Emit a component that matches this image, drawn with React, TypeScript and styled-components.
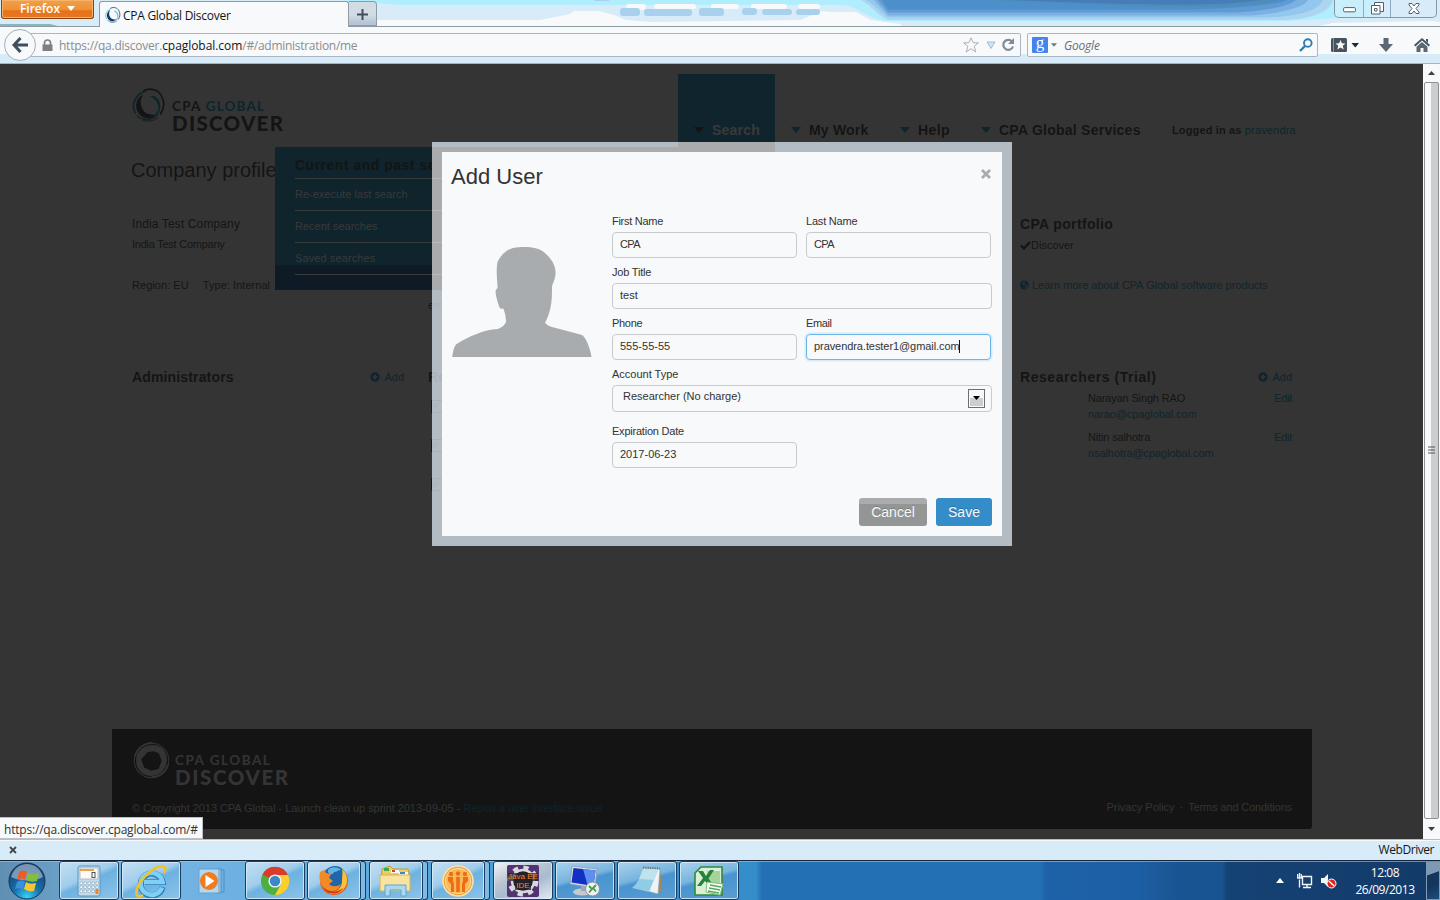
import React from "react";
import styled, { createGlobalStyle } from "styled-components";

const sans = '"Liberation Sans", Arial, sans-serif';
const ui = '"Open Sans", "Noto Sans", sans-serif';
const ink = "#141414";
const teal = "#0f242c";
const dim = "#343434";

const Global = createGlobalStyle`
  * { box-sizing: border-box; }
  body { margin: 0; overflow: hidden; background: ${dim}; }
`;

const Screen = styled.div`
  width: 1440px;
  height: 900px;
  display: flex;
  flex-direction: column;
  position: relative;
  overflow: hidden;
  font-family: ${sans};
`;

const T = styled.span<{ $s?: number; $c?: string; $b?: boolean; $track?: number; $ui?: boolean }>`
  font-family: ${(p) => (p.$ui ? ui : sans)};
  font-size: ${(p) => p.$s ?? 11}px;
  color: ${(p) => p.$c ?? ink};
  font-weight: ${(p) => (p.$b ? (p.$ui ? 600 : 700) : 400)};
  letter-spacing: ${(p) => p.$track ?? 0}px;
  white-space: nowrap;
`;

/* ---------- browser chrome ---------- */
const TitleBar = styled.div`
  height: 27px;
  flex: none;
  position: relative;
  display: flex;
  align-items: flex-start;
  background: #d8ebf9;
  border-bottom: 1px solid #8f9ba3;
`;
const Sky = styled.svg`
  position: absolute;
  inset: 0;
`;
const FirefoxButton = styled.div`
  position: relative;
  width: 93px;
  height: 19px;
  margin-left: 1px;
  display: flex;
  justify-content: center;
  align-items: center;
  gap: 7px;
  background: linear-gradient(#f3a049 0, #ee9033 55%, #e8701a 60%, #e57a22 100%);
  border: 1px solid #8c4312;
  border-top: 0;
  border-radius: 0 0 3px 3px;
  box-shadow: inset 0 0 0 1px #f5b26a;
  padding-bottom: 1px;
`;
const Tab = styled.div`
  position: relative;
  width: 250px;
  height: 27px;
  margin: 1px 0 0 5px;
  padding: 0 0 0 5px;
  display: flex;
  align-items: center;
  gap: 2px;
  background: #f7f9fb;
  border: 1px solid #8f9ba3;
  border-bottom: 0;
  border-radius: 3px 3px 0 0;
`;
const NewTab = styled.div`
  position: relative;
  width: 28px;
  height: 25px;
  margin-top: 1px;
  padding-top: 2px;
  display: grid;
  place-items: center;
  background: linear-gradient(#d3dce5 0 55%, #b5c5d6 90%);
  border: 1px solid #8f9ba3;
  border-left: 0;
  border-radius: 0 4px 0 0;
`;
const WindowButtons = styled.div`
  position: relative;
  margin-left: auto;
  margin-right: 3px;
  width: 103px;
  height: 18px;
  display: grid;
  grid-template-columns: 28px 27px 1fr;
  border: 1px solid #8497a8;
  border-top: 0;
  border-radius: 0 0 5px 5px;
  background: linear-gradient(90deg, #c8effb 0 45px, #d8ebf9 45px);
`;
const WindowButton = styled.div`
  display: grid;
  place-items: center;
  & + & {
    border-left: 1px solid #8fa9c0;
  }
`;
const NavBar = styled.div`
  height: 37px;
  flex: none;
  display: flex;
  align-items: flex-start;
  padding-top: 6px;
  position: relative;
  background: linear-gradient(#f7f9fb 0 27px, #d8ebf9 27px);
  border-bottom: 1px solid #a9b3bc;
`;
const Back = styled.div`
  width: 32px;
  height: 32px;
  margin: -4px 0 0 4px;
  z-index: 1;
  display: grid;
  place-items: center;
  background: #f7f9fb;
  border: 1px solid #a3b0bc;
  border-radius: 50%;
`;
const UrlBox = styled.div`
  width: 992px;
  height: 24px;
  margin-left: -7px;
  padding: 0 5px 0 12px;
  display: flex;
  align-items: center;
  background: #f7f9fb;
  border: 1px solid #a9b7c4;
  border-radius: 2px;
`;
const UrlText = styled.div`
  flex: 1;
  margin-left: 6px;
  white-space: nowrap;
`;
const SearchBox = styled.div`
  width: 291px;
  height: 24px;
  margin-left: 6px;
  padding: 0 4px;
  display: flex;
  align-items: center;
  background: #f7f9fb;
  border: 1px solid #a9b7c4;
  border-radius: 2px;
`;
const GoogleBadge = styled.div`
  width: 16px;
  height: 16px;
  display: flex;
  justify-content: center;
  background: #4384ee;
  border-radius: 1px;
  color: #fff;
  font: 400 17px/12px "Liberation Serif", serif;
`;
const ToolIcons = styled.div`
  flex: 1;
  height: 24px;
  display: flex;
  align-items: center;
  padding-left: 13px;
`;

/* ---------- web page ---------- */
const Viewport = styled.div`
  height: 775px;
  flex: none;
  display: flex;
`;
const Page = styled.div`
  width: 1423px;
  display: flex;
  flex-direction: column;
  background: ${dim};
  padding: 0 111px 10px 112px;
`;
const Header = styled.div`
  height: 78px;
  padding-left: 20px;
  display: flex;
`;
const Brand = styled.div`
  display: flex;
  align-items: flex-start;
`;
const BrandName = styled.div`
  margin-left: 6px;
  display: flex;
  flex-direction: column;
  font-family: Lato, sans-serif;
`;
const BrandLine = styled.div<{ $big?: boolean; $track?: number; $c: string }>`
  font-size: ${(p) => (p.$big ? 20.5 : 13.5)}px;
  line-height: ${(p) => (p.$big ? 20 : 14)}px;
  font-weight: ${(p) => (p.$big ? 900 : 700)};
  letter-spacing: ${(p) => p.$track ?? 0}px;
  color: ${(p) => p.$c};
  white-space: pre;
`;
const Nav = styled.div`
  display: flex;
  margin: 10px 0 0 auto;
  padding-right: 16px;
`;
const NavItem = styled.div<{ $active?: boolean; $w: number }>`
  width: ${(p) => p.$w}px;
  height: 78px;
  padding: 48px 0 0 16px;
  display: flex;
  align-items: flex-start;
  gap: 8px;
  line-height: 16px;
  background: ${(p) => (p.$active ? teal : "transparent")};
`;
const Caret = styled.i<{ $c: string }>`
  margin-top: 5px;
  border: 5px solid transparent;
  border-top: 6px solid ${(p) => p.$c};
  border-bottom: 0;
`;
const Dropdown = styled.div`
  position: absolute;
  left: 275px;
  top: 147px;
  width: 403px;
  height: 143px;
  padding: 0 0 0 20px;
  background: linear-gradient(${teal} 0 118px, #0e1a26 118px);
`;
const DropTitle = styled.div`
  height: 32px;
  line-height: 36px;
  border-bottom: 1px solid #3a3a3a;
`;
const DropItem = styled.div`
  height: 32px;
  line-height: 28px;
  border-bottom: 1px solid #3a3a3a;
`;
const Title = styled.div`
  height: 56px;
  line-height: 56px;
  padding-left: 19px;
`;
const Columns = styled.div<{ $h: number; $top?: number }>`
  height: ${(p) => p.$h}px;
  padding: ${(p) => p.$top ?? 0}px 20px 0;
  display: grid;
  grid-template-columns: repeat(4, 272px);
  column-gap: 24px;
`;
const Line = styled.div<{ $mt?: number; $gap?: number }>`
  height: 20px;
  line-height: 20px;
  margin-top: ${(p) => p.$mt ?? 0}px;
  display: flex;
  align-items: center;
  gap: ${(p) => p.$gap ?? 0}px;
`;
const GroupHead = styled.div`
  height: 23px;
  line-height: 20px;
  display: flex;
  justify-content: space-between;
  align-items: flex-start;
`;
const AddLink = styled.div`
  display: flex;
  align-items: center;
  gap: 4px;
  height: 19px;
`;
const Person = styled.div`
  height: 39px;
  padding-left: 68px;
  display: flex;
  justify-content: space-between;
  line-height: 16px;
`;
const PersonText = styled.div`
  display: flex;
  flex-direction: column;
`;
const Broken = styled.svg`
  display: block;
  margin: 0 0 25px 3px;
  &:first-of-type {
    margin-top: 0;
  }
`;
const Footer = styled.div`
  height: 100px;
  margin-top: auto;
  padding: 13px 20px 0 21px;
  background: ${ink};
  border-radius: 0 0 3px 3px;
`;
const FooterRow = styled.div`
  margin: 13px 0 0 -1px;
  display: flex;
  justify-content: space-between;
  line-height: 16px;
`;
const FooterLinks = styled.div`
  display: flex;
  gap: 5px;
  margin-top: -1px;
`;

const Scroll = styled.div`
  width: 17px;
  display: flex;
  flex-direction: column;
  align-items: center;
  background: #f7f9fb;
`;
const ScrollArrow = styled.div`
  height: 18px;
  display: grid;
  place-items: center;
`;
const Thumb = styled.div`
  width: 15px;
  flex: 1;
  display: grid;
  place-items: center;
  background: linear-gradient(90deg, #f7f9fb 0 6px, #cbcdcf 6px);
  border: 1px solid #8d9194;
  border-radius: 2px;
`;

/* ---------- dialog ---------- */
const Frame = styled.div`
  position: absolute;
  left: 432px;
  top: 142px;
  width: 580px;
  height: 404px;
  padding: 10px;
  background:
    repeating-linear-gradient(transparent 0 31px, #b3bbc3 31px 32px) 0 5px / 10px 143px no-repeat,
    linear-gradient(#a9abac, #a9abac) 0 5px / 10px 143px no-repeat,
    linear-gradient(#a9abac, #a9abac) 10px 5px / 333px 5px no-repeat,
    linear-gradient(#a9abac, #a9abac) 246px 0 / 97px 5px no-repeat,
    rgba(228, 240, 251, 0.72);
`;
const Dialog = styled.div`
  height: 384px;
  padding: 0 10px 10px 9px;
  display: flex;
  flex-direction: column;
  background: #f7f9fb;
`;
const DialogHead = styled.div`
  height: 61px;
  padding-top: 10px;
  display: flex;
  justify-content: space-between;
  line-height: 30px;
`;
const DialogBody = styled.div`
  display: flex;
  flex: 1;
  padding-left: 1px;
`;
const Avatar = styled.svg`
  margin: 34px 20px 0 0;
  flex: none;
`;
const Form = styled.div`
  width: 380px;
`;
const Row = styled.div<{ $mb?: number }>`
  display: flex;
  gap: 9px;
  margin-bottom: ${(p) => p.$mb ?? 6}px;
`;
const FieldBox = styled.div<{ $wide?: boolean }>`
  width: ${(p) => (p.$wide ? 380 : 185)}px;
`;
const FieldLabel = styled.div`
  height: 19px;
  line-height: 14px;
`;
const Control = styled.div<{ $focus?: boolean; $select?: boolean }>`
  height: ${(p) => (p.$select ? 27 : 26)}px;
  padding: ${(p) => (p.$select ? "0 6px 3px 10px" : "0 7px 2px")};
  display: flex;
  align-items: center;
  justify-content: ${(p) => (p.$select ? "space-between" : "flex-start")};
  border: 1px solid ${(p) => (p.$focus ? "#6db4e8" : "#c8cbce")};
  border-radius: 4px;
  box-shadow: ${(p) => (p.$focus ? "0 0 0 1.5px #d8ebf9" : "none")};
`;
const TextCaret = styled.i`
  width: 1px;
  height: 13px;
  margin-left: -1px;
  background: #141414;
`;
const SelectArrow = styled.div`
  width: 17px;
  height: 19px;
  margin-top: 2px;
  display: grid;
  place-items: center;
  border: 1px solid #6c6f71;
  box-shadow: inset 0 0 0 1px #f7f9fb;
  background: linear-gradient(#f7f9fb 0 8px, #cbcdcf 8px);
`;
const Actions = styled.div`
  display: flex;
  justify-content: flex-end;
  gap: 9px;
`;
const Button = styled.div<{ $primary?: boolean }>`
  width: ${(p) => (p.$primary ? 56 : 68)}px;
  height: 28px;
  text-align: center;
  line-height: 27px;
  border-radius: 3px;
  background: ${(p) => (p.$primary ? "#348dc9" : "linear-gradient(#a9abac 0 6px, #949696 6px)")};
  text-shadow: 0 -1px 0 rgba(0, 0, 0, 0.2);
`;

/* ---------- bottom bars ---------- */
const LinkHint = styled.div`
  position: absolute;
  left: 0;
  top: 817px;
  width: 203px;
  height: 22px;
  padding-left: 4px;
  line-height: 21px;
  background: #f7f9fb;
  border: 1px solid #b8c0c8;
  border-left: 0;
`;
const AddonBar = styled.div`
  height: 21px;
  flex: none;
  padding: 0 6px 1px 9px;
  display: flex;
  align-items: center;
  justify-content: space-between;
  background: #d8ebf9;
  border-top: 1px solid #b4bcc4;
  box-shadow: inset 0 1px 0 #f7f9fb;
`;
const Taskbar = styled.div`
  height: 40px;
  flex: none;
  display: flex;
  border-top: 1px solid #16263a;
  box-shadow: inset 0 1px 0 rgba(160, 200, 235, 0.6);
  background: linear-gradient(
    90deg,
    #5f8fb2 0,
    #6a9fc5 58px,
    #7db9e4 62px,
    #6db0e2 240px,
    #5aa5d8 420px,
    #3f90ca 620px,
    #348dc9 756px,
    #2370b5 762px,
    #2370b5 1040px,
    #1d62a9 1046px,
    #1d5fa4 1136px,
    #195492 1178px,
    #195492 1222px,
    #154274 1227px,
    #133a69 1440px
  );
`;
const StartSlot = styled.div`
  width: 59px;
  padding: 1px 0 0 8px;
`;
const Slot = styled.div`
  width: 62px;
  display: flex;
`;
const TaskButton = styled.div<{ $kind?: "flat" | "stack" | "active"; $deep?: boolean }>`
  width: ${(p) => (p.$kind === "stack" ? 54 : 60)}px;
  height: 39px;
  display: grid;
  place-items: center;
  border-radius: 3px;
  border: ${(p) => (p.$kind === "flat" ? "none" : "1px solid #1b3c5e")};
  box-shadow: ${(p) => (p.$kind === "flat" ? "none" : "inset 0 0 0 1px rgba(215,236,250,0.85)")};
  background: ${(p) =>
    p.$kind === "flat"
      ? "none"
      : p.$kind === "active"
      ? "linear-gradient(155deg, #f0f4f8 0, #b9c4d0 40%, #a9bbd0 60%, #e4eaf0 100%)"
      : p.$deep
      ? "linear-gradient(165deg, #a9d3ee 0, #78b4de 42%, #4a94cf 50%, #5a9dd4 100%)"
      : "linear-gradient(155deg, #c4e0f2 0, #a0cdec 42%, #6db2e0 52%, #8cc4ea 100%)"};
`;
const StackEdge = styled.div`
  width: 5px;
  height: 39px;
  border: 1px solid #1b3c5e;
  border-left: 0;
  border-radius: 0 3px 3px 0;
  background: #7dbbe6;
`;
const Tray = styled.div`
  margin-left: auto;
  display: flex;
  align-items: center;
`;
const Clock = styled.div`
  width: 70px;
  margin: 0 6px 0 13px;
  display: flex;
  flex-direction: column;
  align-items: center;
  line-height: 17px;
`;
const ShowDesktop = styled.div`
  width: 14px;
  height: 38px;
  border: 1px solid #7f9ab5;
  background: linear-gradient(160deg, #7f98b3 0 30%, #15365c 32% 60%, #1b4d7e 100%);
`;

const Ring = ({ size = 36, a, b, white }: { size?: number; a: string; b: string; white?: boolean }) => (
  <svg width={size} height={size} viewBox="0 0 36 36" fill="none">
    {white ? (
      <>
        <path fillRule="evenodd" fill={a} d="M18 3C27 2 33 9 33 17s-6 16-15 16S3 27 3 18 9 4 18 3zm2 6l-6 1-6 7 3 8 7 3 7-2 3-8-3-7z" />
        <circle cx="18" cy="18" r="16.8" stroke={a} strokeWidth="1" />
        <path d="M2 14C4 6 11 1 19 1M34 22c-2 7-8 12-16 12" stroke={a} strokeWidth="1.8" />
      </>
    ) : (
      <>
        <path d="M12 3c8-4 16-1 19 5 4 7 3 14-1 20" stroke={a} strokeWidth="1.7" />
        <path d="M15 3C4 6-2 18 4 27" stroke={b} strokeWidth="1.8" />
        <path fill={a} d="M12 7C3 11 2 23 9 29c5 4 12 4 16-1-6 1-12-1-14-6-3-5-2-11 1-15z" />
        <path fill={b} d="M23 9c7 4 8 12 4 17-3 5-8 7-12 7-4 0-8-1-10-4 6 6 16 6 21 0 5-6 3-15-5-20z" stroke={b} strokeWidth="1.2" />
        <path d="M11 34c6 2 12 1 17-3" stroke={a} strokeWidth=".8" />
      </>
    )}
  </svg>
);

const Plus = () => (
  <svg width="10" height="10" viewBox="0 0 10 10">
    <circle cx="5" cy="5" r="4.7" fill={teal} />
    <path d="M5 2.4v5.2M2.4 5h5.2" stroke={dim} strokeWidth="1.6" />
  </svg>
);

const Field = ({ label, value, focus, wide, lt, vt }: { label: string; value: string; focus?: boolean; wide?: boolean; lt?: number; vt?: number }) => (
  <FieldBox $wide={wide}>
    <FieldLabel>
      <T $track={lt} $c="#333">{label}</T>
    </FieldLabel>
    <Control $focus={focus}>
      <T $track={vt} $c="#333">{value}</T>
      {focus && <TextCaret />}
    </Control>
  </FieldBox>
);

const Group = ({ title, track, children }: { title: string; track?: number; children?: React.ReactNode }) => (
  <div>
    <GroupHead>
      <T $s={14} $b $track={track}>{title}</T>
      <AddLink>
        <Plus />
        <T $c={teal}>Add</T>
      </AddLink>
    </GroupHead>
    {children}
  </div>
);

const BrokenImages = styled.div`
  padding-top: 10px;
`;
const BrokenImage = () => (
  <Broken width="14" height="14" viewBox="0 0 14 14" fill="none" stroke="#151515">
    <path d="M.5.5h13v12H.5z" />
    <path d="M3 10V4h2l2-1M4 8l3-3" />
  </Broken>
);

const people = [
  { name: "Narayan Singh RAO", mail: "narao@cpaglobal.com" },
  { name: "Nitin salhotra", mail: "nsalhotra@cpaglobal.com" },
];

const StartOrb = () => (
  <svg width="38" height="38" viewBox="0 0 38 38">
    <defs>
      <radialGradient id="orb" cx=".5" cy=".95" r=".85">
        <stop offset="0" stopColor="#35d3f7" />
        <stop offset=".45" stopColor="#1a6fae" />
        <stop offset="1" stopColor="#17416e" />
      </radialGradient>
    </defs>
    <circle cx="19" cy="19" r="18" fill="url(#orb)" stroke="#173657" />
    <path d="M3 15C6 5 13 2 19 2s13 3 16 13c-8 5-24 4-32 0z" fill="#a9c4d9" opacity=".65" />
    <path d="M11 10c3-2 5-2 8 0l-2 8c-3-2-5-2-8 0z" fill="#ef5b23" />
    <path d="M20 11c3 1 6 2 11 0l-2 8c-4 1-7 1-11-1z" fill="#85bd3c" />
    <path d="M9 20c3-2 5-2 8 0l-2 7c-3-1-6-1-8 0z" fill="#3b8fdc" />
    <path d="M18 20c3 2 6 2 10 1l-2 8c-4 1-6 0-10-2z" fill="#f8c631" />
  </svg>
);

const CalcIcon = () => (
  <svg width="24" height="32" viewBox="0 0 24 32">
    <rect x="1" y="1" width="22" height="30" rx="2" fill="#c2dcef" stroke="#5d93bd" />
    <rect x="3" y="3" width="18" height="11" fill="#f8fafb" stroke="#a4a9ac" strokeWidth=".7" />
    <path d="M3 5h14" stroke="#f2a03f" strokeWidth="2" />
    <rect x="15" y="7.500" width="3" height="5" fill="none" stroke="#444" strokeWidth=".9" />
    <g fill="#fff" stroke="#6d95b4" strokeWidth=".5">
      {[17, 21, 25].map((y) => [3, 7, 11, 15, 19].map((x) => <rect key={`${x}-${y}`} x={x} y={y} width="2.6" height="2.6" />))}
    </g>
    <rect x="18.5" y="24" width="3" height="5" fill="#ef8127" />
  </svg>
);

const IeIcon = () => (
  <svg width="34" height="34" viewBox="0 0 34 34" fill="none">
    <path d="M28.500 23A11 11 0 1 1 28.500 18H11" stroke="#2b7fbd" strokeWidth="6.200" />
    <path d="M28 23.500A11 11 0 1 1 28.500 18H10" stroke="#7fd0f5" strokeWidth="4.600" />
    <path d="M9 31c-5 3-8 1-6-6C6 15 19 3 28 2c4 0 4 3 2 7" stroke="#f3c12c" strokeWidth="2.600" />
  </svg>
);

const WmpIcon = () => (
  <svg width="30" height="28" viewBox="0 0 30 28">
    <path d="M22 3h4v22h-4z" fill="#6db2e0" stroke="#4b8fc4" />
    <path d="M19 2h4v24h-4z" fill="#a9d3ee" stroke="#4b8fc4" />
    <rect x="1" y="2" width="20" height="24" fill="#b5d7ee" stroke="#67a1cc" />
    <circle cx="11" cy="14" r="9" fill="#ef7d1f" />
    <path d="M7.5 8l9 6-9 6z" fill="#fff" />
  </svg>
);

const ChromeIcon = () => (
  <svg width="30" height="30" viewBox="0 0 30 30">
    <circle cx="15" cy="15" r="14" fill="#4caf3f" />
    <path d="M15 15L2.500 8.500A14 14 0 0 1 28 9.500z" fill="#dc3a2b" />
    <path d="M14 9h14a14 14 0 0 1-13 20l6-11z" fill="#fbd02e" />
    <circle cx="15" cy="15" r="6.600" fill="#f4f7f9" />
    <circle cx="15" cy="15" r="5.200" fill="#3b87c9" />
  </svg>
);

const FirefoxIcon = () => (
  <svg width="32" height="32" viewBox="0 0 32 32">
    <circle cx="16" cy="16" r="14" fill="#e2601c" />
    <circle cx="17" cy="12" r="11" fill="#1f66ab" />
    <path d="M10 5c4-4 10-3 13 0-3 0-4 2-7 2-1 3-4 3-6 0z" fill="#5fb5e8" />
    <path d="M24 4c6 5 7 15 1 21-4 4-9 5-14 3 8 0 13-5 13-12 0-4 1-9 0-12z" fill="#f9c23a" />
    <path d="M2 7l4-2 2 3 5 1-2 4 4 3-4 3c3 3 8 3 12 0-3 8-12 9-17 4C1 18 1 12 2 7z" fill="#f28a25" />
    <path d="M5 22c6 6 14 6 20 1-3 7-15 8-20-1z" fill="#c9381a" />
  </svg>
);

const ExplorerIcon = () => (
  <svg width="34" height="32" viewBox="0 0 34 32">
    <path d="M3 4l8-3 3 3h15l1 4v17H2z" fill="#eecb63" stroke="#c39a35" />
    <path d="M5 3h5v3H5z" fill="#3fa845" />
    <path d="M12 5h8v3h-8z" fill="#f7f9fb" /><path d="M13 5h3v2h-3z" fill="#d9442d" />
    <path d="M20 7h9v3h-9z" fill="#f7f9fb" /><path d="M21 7h5v2h-5z" fill="#3b87c9" />
    <path d="M1 10h30v16H1z" fill="#f8e3a0" stroke="#d6b456" />
    <path d="M6 31V20h21v11h-5v-6H11v6z" fill="#a9d8f2" stroke="#5fa6d2" />
  </svg>
);

const FigureIcon = () => (
  <svg width="32" height="32" viewBox="0 0 32 32">
    <circle cx="16" cy="16" r="15" fill="#f5a02c" stroke="#fbe0a8" strokeWidth="1.600" />
    <circle cx="16" cy="16" r="12.700" fill="#f9b95a" stroke="#fdebc8" strokeWidth=".8" />
    <g fill="#ee6d12">
      <path d="M6 12h5v4l1 3v8H9v-8l-3-3zM26 12h-5v4l-1 3v8h3v-8l3-3zM14.200 12h3.600v15h-3.600z" />
      <circle cx="9" cy="9" r="2.200" /><circle cx="16" cy="8.500" r="2.200" /><circle cx="23" cy="9" r="2.200" />
    </g>
  </svg>
);

const JavaBadge = styled.div`
  width: 32px;
  height: 32px;
  display: grid;
  & > * {
    grid-area: 1 / 1;
  }
`;
const JavaText = styled.div`
  position: relative;
  padding-top: 7px;
  display: flex;
  flex-direction: column;
  align-items: center;
  color: #f28a25;
  font: 8px/9px ${sans};
  white-space: nowrap;
`;
const JavaIcon = () => (
  <JavaBadge>
    <svg width="32" height="32" viewBox="0 0 32 32">
      <rect width="32" height="32" rx="2" fill="#533273" />
      <circle cx="16" cy="16" r="13.500" fill="none" stroke="#d6d8da" strokeWidth="4" strokeDasharray="5.300 5.300" />
      <circle cx="16" cy="16" r="11" fill="#232323" stroke="#d6d8da" strokeWidth="2.400" />
      <path d="M1 8h30v8H1zM8 16h16v9H8z" fill="#27202b" opacity=".75" />
    </svg>
    <JavaText>
      <span>Java EE</span>
      <span>IDE</span>
    </JavaText>
  </JavaBadge>
);

const RdpIcon = () => (
  <svg width="32" height="32" viewBox="0 0 32 32">
    <ellipse cx="13" cy="27" rx="9" ry="3.500" fill="#c4cad0" />
    <path d="M12 20h6v6h-6z" fill="#9ea6ae" />
    <path d="M3 1l25 3-2 19L1 19z" fill="#d6dce2" stroke="#8a96a2" strokeWidth=".7" />
    <path d="M4.500 3l22 2.500-2 15.500L2.500 17.500z" fill="#1330c4" />
    <path d="M14 4l12.500 1.500-2 15.500-6-1z" fill="#5d8ff0" />
    <circle cx="23.500" cy="24" r="7" fill="#eef1f2" stroke="#8b9299" />
    <path d="M20 21l3 3-3 3.500M27 20l-3 3 3 3.500" fill="none" stroke="#3e9e43" strokeWidth="1.800" />
  </svg>
);

const NoteIcon = () => (
  <svg width="32" height="32" viewBox="0 0 32 32">
    <path d="M29 4l2 22-5 3z" fill="#a98657" />
    <path d="M12 3l17 1-2 25-18-5z" fill="#eef3f6" stroke="#8aa0b0" strokeWidth=".6" />
    <path d="M12 4l15 1-9 22L1 23c5-4 9-11 11-19z" fill="#8fcde6" />
    <path d="M12 4l15 1-4 10-15-1z" fill="#bfe2ef" />
    <path d="M12 2.500l17 1" stroke="#6b7880" strokeWidth="2" strokeDasharray="1.300 1" />
  </svg>
);

const ExcelIcon = () => (
  <svg width="32" height="32" viewBox="0 0 32 32">
    <path d="M8 2h21v28H2V8z" fill="#dcefd6" stroke="#2e8a3c" strokeWidth="1.600" />
    <path d="M14 6h13v12H14z" fill="#a5d39a" />
    <path d="M5 6h5l3 5 4-6h4l-5.500 8.500L21 21h-5l-4-5-4 5H4l6-8z" fill="#23833a" />
    <path d="M14 17l16 2-3 11-14-3z" fill="#fafcfa" stroke="#7ec07f" />
    <path d="M17 20l11 2M16 23l11 2M15 26l11 2" stroke="#55a85a" strokeWidth="1.300" />
  </svg>
);

export default function App() {
  return (
    <Screen>
      <Global />

      <TitleBar>
        <Sky width="1440" height="26" viewBox="0 0 1440 26">
          <path d="M0 24h50l8 2H0z" fill="#86b7bd" />
          <path d="M340 0h560v5H400z" fill="#b0eefd" />
          <path d="M377 20l163 0 30-6 4-3 25 0 15 4 12 5 25 2 150-2 20-9 10 1 25 0 15 8 30 4v3H377z" fill="#f7f9fb" />
          <g fill="#f7f9fb">
            <rect x="626" y="4" width="20" height="6" rx="3" /><rect x="654" y="4" width="42" height="5" rx="2.500" />
            <rect x="711" y="4" width="28" height="5" rx="2.500" /><rect x="751" y="4" width="36" height="5" rx="2.500" />
            <rect x="798" y="4" width="22" height="5" rx="2.500" />
          </g>
          <g fill="#a9d1ee">
            <rect x="620" y="8" width="20" height="8" rx="3" /><rect x="644" y="9" width="48" height="7" rx="3" />
            <rect x="699" y="8" width="25" height="8" rx="3" /><rect x="742" y="8" width="15" height="7" rx="3" />
            <rect x="762" y="9" width="30" height="6" rx="3" /><rect x="796" y="9" width="24" height="6" rx="3" />
            <rect x="595" y="0" width="14" height="1" />
          </g>
          <path d="M838 0h500v18l-50 3H885c-17-3-25-13-47-18z" fill="#b0eefd" />
          <path d="M861 0h472c-2 8-12 19-50 20H888C878 16 872 6 861 0z" fill="#aed5f0" />
          <path d="M866 0h393 64c-3 8-16 16-56 17.500H888C882 14 874 4 866 0z" fill="#93c8ee" />
          <path d="M874 0h434c-4 8-30 14-60 15.500H888z" fill="#7db0e2" />
          <path d="M878 0h418c-6 6-30 11-60 12.500H888z" fill="#5f9bd3" />
          <path d="M882 0h405c-8 5-60 9-100 9.500H888z" fill="#4d8fcb" />
          <path d="M980 0h297c-10 4-40 6-90 7-70 0-120-4-207-7z" fill="#4f8db8" />
          <path d="M1010 0h250c-20 3-40 4.500-80 4.500-60 0-100-2-170-4.500z" fill="#457db8" />
          <path d="M1320 26l12-3 100-2 8 1v4z" fill="#f7f9fb" />
        </Sky>
        <FirefoxButton>
          <T $ui $s={12} $b $c="#fff">Firefox</T>
          <svg width="8" height="5" viewBox="0 0 8 5"><path d="M0 0h8L4 5z" fill="#fff" /></svg>
        </FirefoxButton>
        <Tab>
          <Ring size={16} a="#15395c" b="#4cb6e0" />
          <T $ui $s={12} $track={-0.27}>CPA Global Discover</T>
        </Tab>
        <NewTab>
          <svg width="11" height="11" viewBox="0 0 11 11"><path d="M5.500 0v11M0 5.500h11" stroke="#3f4f5e" strokeWidth="2" /></svg>
        </NewTab>
        <WindowButtons>
          <WindowButton style={{ paddingTop: 3 }}>
            <svg width="13" height="6" viewBox="0 0 13 6"><rect x=".6" y=".6" width="11.800" height="4.200" rx="1" fill="#fff" stroke="#53606e" /></svg>
          </WindowButton>
          <WindowButton>
            <svg width="13" height="13" viewBox="0 0 13 13" fill="#fff" stroke="#53606e"><path d="M3.500.500h9v9h-9z" /><path d="M.500 3.500h8.500v8.500H.500z" /><path d="M3.500 6.500h2.500v2.500H3.500z" /></svg>
          </WindowButton>
          <WindowButton>
            <svg width="12" height="11" viewBox="0 0 12 11"><path d="M1 .5h3l2 2.500 2-2.500h3v1.500L8 5.500 11 9v1.500H8L6 8l-2 2.500H1V9l3-3.500L1 2z" fill="#fff" stroke="#53606e" /></svg>
          </WindowButton>
        </WindowButtons>
      </TitleBar>

      <NavBar>
        <Back>
          <svg width="16" height="16" viewBox="0 0 16 16" fill="none" stroke="#3f4f5e"><path d="M8.500 1L2 8l6.500 7M2 8h14" strokeWidth="3" /></svg>
        </Back>
        <UrlBox>
          <svg width="11" height="12" viewBox="0 0 11 12"><path d="M2.500 6V4a3 3 0 0 1 6 0v2" fill="none" stroke="#7d7f81" strokeWidth="1.700" /><rect x=".5" y="5.500" width="10" height="6.500" fill="#7d7f81" /></svg>
          <UrlText>
            <T $ui $s={12} $c="#8b8d8f" $track={-0.24}>https://qa.discover.</T>
            <T $ui $s={12} $track={-0.05}>cpaglobal.com</T>
            <T $ui $s={12} $c="#8b8d8f" $track={-0.29}>/#/administration/me</T>
          </UrlText>
          <svg width="52" height="16" viewBox="0 0 52 16" fill="none">
            <path d="M8 .8l2.200 5h5.200l-4.200 3.500 1.600 5.700L8 11.700 3.200 15l1.600-5.700L.6 5.800h5.200z" stroke="#a9b1b9" />
            <path d="M24 5h8l-4 6.500z" fill="#cfe4f3" stroke="#a5bccd" />
            <path d="M49 4.500A5 5 0 1 0 50 9.500" stroke="#7f8c9a" strokeWidth="2.200" /><path d="M51 1v6h-6z" fill="#7f8c9a" />
          </svg>
        </UrlBox>
        <SearchBox>
          <GoogleBadge>g</GoogleBadge>
          <svg width="6" height="4" viewBox="0 0 7 4" style={{ margin: "0 7px 0 3px" }}><path d="M0 0h7L3.500 4z" fill="#6d7780" /></svg>
          <T $ui $s={12} $c="#6b6d6f" style={{ fontStyle: "italic", flex: 1 }} $track={-0.2}>Google</T>
          <svg width="14" height="14" viewBox="0 0 14 14" fill="none" stroke="#2e7cb8"><circle cx="8.800" cy="5" r="3.800" strokeWidth="1.900" /><path d="M6 8l-5 5" strokeWidth="2.400" /></svg>
        </SearchBox>
        <ToolIcons>
          <svg width="28" height="14" viewBox="0 0 28 14">
            <rect width="16" height="14" rx="1.500" fill="#46525e" /><path d="M2.500 0v14" stroke="#8793a0" />
            <path d="M9.500 2l1.400 3.300 3.600.2-2.800 2.300 1 3.600-3.200-2-3.200 2 1-3.600-2.800-2.300 3.600-.2z" fill="#f7f9fb" />
            <path d="M20.500 5h7.500l-3.700 4.500z" fill="#1f2b33" />
          </svg>
          <svg width="14" height="14" viewBox="0 0 14 14" style={{ marginLeft: 20 }}><path d="M4.500 0h5v6H14l-7 8-7-8h4.500z" fill="#5b6773" /></svg>
          <svg width="16" height="14" viewBox="0 0 16 14" style={{ marginLeft: 21 }}><path d="M8 0l8 7-1.300 1.400L8 2.600 1.300 8.400 0 7z" fill="#46525e" /><path d="M12 1h2v4l-2-2z" fill="#46525e" /><path d="M8 4l5.500 4.700V14h-4v-4h-3v4h-4V8.700z" fill="#5b6773" /></svg>
        </ToolIcons>
      </NavBar>

      <Viewport>
        <Page>
          <Header>
            <Brand style={{ paddingTop: 24 }}>
              <Ring a={ink} b={teal} size={34} />
              <BrandName style={{ paddingTop: 11 }}>
                <BrandLine $c={ink} $track={1.2}>CPA <span style={{ color: teal }}>GLOBAL</span></BrandLine>
                <BrandLine $big $c={ink} $track={1.3}>DISCOVER</BrandLine>
              </BrandName>
            </Brand>
            <Nav>
              <NavItem $w={97} $active><Caret $c={ink} /><T $s={14} $b $c="#3a3a3a" $track={0.2}>Search</T></NavItem>
              <NavItem $w={109}><Caret $c={teal} /><T $s={14} $b $track={0.2}>My Work</T></NavItem>
              <NavItem $w={81}><Caret $c={teal} /><T $s={14} $b $track={0.4}>Help</T></NavItem>
              <NavItem $w={191}><Caret $c={teal} /><T $s={14} $b $track={0.25}>CPA Global Services</T></NavItem>
              <NavItem $w={140}><T $b $track={0.15}>Logged in as <T $c={teal} $track={0.15}>pravendra</T></T></NavItem>
            </Nav>
          </Header>
          <Title><T $s={20}>Company profile</T></Title>
          <Columns $h={169} $top={16}>
            <div>
              <Line><T $s={12} $track={0.12}>India Test Company</T></Line>
              <Line><T $track={-0.25}>India Test Company</T></Line>
              <Line $mt={21} $gap={14}><T $track={0.05}>Region: EU</T><T $track={0.05}>Type: Internal</T></Line>
            </div>
            <div><Line $mt={81}><T>email</T></Line></div>
            <div />
            <div>
              <Line><T $s={14} $b $track={0.35}>CPA portfolio</T></Line>
              <Line $mt={1}>
                <svg width="11" height="9" viewBox="0 0 11 9"><path d="M1 4.500l3 3L10 1" fill="none" stroke={ink} strokeWidth="2.200" /></svg>
                <T>Discover</T>
              </Line>
              <Line $mt={20} $gap={3}>
                <svg width="9" height="10" viewBox="0 0 9 10"><circle cx="4.500" cy="5" r="4.500" fill={teal} /><path d="M5 1L3 3l2 1-2 1M6 6l2-1-2 4z" stroke={dim} fill="none" /></svg>
                <T $c={teal}>Learn more about CPA Global software products</T>
              </Line>
            </div>
          </Columns>
          <Columns $h={150}>
            <Group title="Administrators" track={0.15} />
            <Group title="Researchers"><BrokenImages><BrokenImage /><BrokenImage /><BrokenImage /></BrokenImages></Group>
            <div />
            <Group title="Researchers (Trial)" track={0.55}>
              {people.map((p) => (
                <Person key={p.name}>
                  <PersonText><T $track={-0.15}>{p.name}</T><T $c={teal} $track={-0.08}>{p.mail}</T></PersonText>
                  <T $c={teal} $track={-0.3}>Edit</T>
                </Person>
              ))}
            </Group>
          </Columns>
          <Footer>
            <Brand>
              <Ring a={dim} b={dim} size={37} white />
              <BrandName style={{ paddingTop: 11, marginLeft: 5 }}>
                <BrandLine $c={dim} $track={1.5}>CPA GLOBAL</BrandLine>
                <BrandLine $big $c={dim} $track={1.6}>DISCOVER</BrandLine>
              </BrandName>
            </Brand>
            <FooterRow>
              <T $c={dim} $track={-0.05}>© Copyright 2013 CPA Global - Launch clean up sprint 2013-09-05 - <T $c={teal} $track={-0.05}>Report a user interface issue</T></T>
              <FooterLinks>
                <T $c={dim} $track={-0.03}>Privacy Policy</T>
                <T $c={dim}>·</T>
                <T $c={dim} $track={-0.13}>Terms and Conditions</T>
              </FooterLinks>
            </FooterRow>
          </Footer>
        </Page>
        <Scroll>
          <ScrollArrow><svg width="7" height="4" viewBox="0 0 7 4"><path d="M3.500 0L7 4H0z" fill="#3c4042" /></svg></ScrollArrow>
          <Thumb><svg width="7" height="9" viewBox="0 0 7 9"><path d="M0 1h7M0 4h7M0 7h7" stroke="#55595c" strokeWidth="1.200" /></svg></Thumb>
          <ScrollArrow style={{ height: 20 }}><svg width="7" height="4" viewBox="0 0 7 4"><path d="M3.500 4L7 0H0z" fill="#3c4042" /></svg></ScrollArrow>
        </Scroll>
      </Viewport>

      <Dropdown>
        <DropTitle><T $s={14} $b $track={0.5}>Current and past se</T></DropTitle>
        <DropItem><T $c="#3a3a3a">Re-execute last search</T></DropItem>
        <DropItem><T $c="#3a3a3a">Recent searches</T></DropItem>
        <DropItem><T $c="#3a3a3a" $track={0.1}>Saved searches</T></DropItem>
      </Dropdown>

      <Frame>
        <Dialog>
          <DialogHead>
            <T $s={22} $c="#333">Add User</T>
            <svg width="10" height="10" viewBox="0 0 10 10" style={{ margin: "7px 1px 0 0" }}><path d="M1 1l8 8M9 1L1 9" stroke="#a9abac" strokeWidth="2.800" /></svg>
          </DialogHead>
          <DialogBody>
            <Avatar width="140" height="110" viewBox="0 0 140 110">
              <path fill="#a9acae" d="M73 0C82 0 90 2 95 8c6 6 9 12 8.500 19-.3 6-3 9-3.500 13 0 8 0 13-1.400 20-1.500 7-3 11-5.600 15.600 2 3 4 3.500 7 4.400l15 4 15 4c3 2 4 5 5.500 8 2.500 6 4 12 4.500 18H0c.3-6 1.300-14 4.600-17 6-4 12-7 20-10 7-3 14-4.500 21.400-5 4-2 7-4 8-7 0-5-1-9-2.700-13.500-2 .5-3.300.3-4-1.500-2-6-4-12-3.700-16 .5-1.500 1-2.500 2-3C45 31 44 22 45.500 15 49 8 54 3 61 1c4-1 8-1 12-1z" />
            </Avatar>
            <Form>
              <Row>
                <Field label="First Name" value="CPA" lt={-0.27} vt={-0.6} />
                <Field label="Last Name" value="CPA" lt={-0.2} vt={-0.6} />
              </Row>
              <Row><Field wide label="Job Title" value="test" lt={-0.2} /></Row>
              <Row>
                <Field label="Phone" value="555-55-55" lt={-0.3} />
                <Field focus label="Email" value="pravendra.tester1@gmail.com" lt={-0.4} vt={-0.07} />
              </Row>
              <Row $mb={11}>
                <FieldBox $wide>
                  <FieldLabel><T $c="#333">Account Type</T></FieldLabel>
                  <Control $select>
                    <T $c="#333" style={{ marginTop: -2 }}>Researcher (No charge)</T>
                    <SelectArrow><svg width="7" height="4" viewBox="0 0 7 4"><path d="M0 0h7L3.500 4z" fill="#000" /></svg></SelectArrow>
                  </Control>
                </FieldBox>
              </Row>
              <Row><Field label="Expiration Date" value="2017-06-23" lt={-0.22} /></Row>
            </Form>
          </DialogBody>
          <Actions>
            <Button><T $s={14} $c="#f7f9fb">Cancel</T></Button>
            <Button $primary><T $s={14} $c="#f7f9fb">Save</T></Button>
          </Actions>
        </Dialog>
      </Frame>

      <LinkHint><T $ui $s={12} $c="#333" $track={-0.2}>https://qa.discover.cpaglobal.com/#</T></LinkHint>

      <AddonBar>
        <svg width="8" height="8" viewBox="0 0 8 8"><path d="M1 1l6 6M7 1L1 7" stroke="#3f464c" strokeWidth="1.800" /></svg>
        <T $ui $s={12} $track={-0.45}>WebDriver</T>
      </AddonBar>

      <Taskbar>
        <StartSlot><StartOrb /></StartSlot>
        <Slot><TaskButton><CalcIcon /></TaskButton></Slot>
        <Slot><TaskButton><IeIcon /></TaskButton></Slot>
        <Slot><TaskButton $kind="flat"><WmpIcon /></TaskButton></Slot>
        <Slot><TaskButton><ChromeIcon /></TaskButton></Slot>
        <Slot><TaskButton $kind="stack"><FirefoxIcon /></TaskButton><StackEdge /></Slot>
        <Slot><TaskButton $kind="stack"><ExplorerIcon /></TaskButton><StackEdge /></Slot>
        <Slot><TaskButton $kind="stack"><FigureIcon /></TaskButton><StackEdge /></Slot>
        <Slot><TaskButton $kind="active"><JavaIcon /></TaskButton></Slot>
        <Slot><TaskButton $deep><RdpIcon /></TaskButton></Slot>
        <Slot><TaskButton $deep><NoteIcon /></TaskButton></Slot>
        <Slot><TaskButton $deep><ExcelIcon /></TaskButton></Slot>
        <Tray>
          <svg width="8" height="5" viewBox="0 0 8 5"><path d="M4 0l4 5H0z" fill="#fff" /></svg>
          <svg width="16" height="16" viewBox="0 0 16 16" fill="none" stroke="#f4f6f8" style={{ marginLeft: 13 }}><path d="M5.500 3.500h9v8h-9zM10 12v2.500M6 14.500h8" strokeWidth="1.400" /><path d="M2.500 6.500v8M.700 1v4h3.600V1M2.500 0v5" strokeWidth="1.300" /></svg>
          <svg width="16" height="16" viewBox="0 0 16 16" style={{ marginLeft: 8 }}><path d="M0 5h3l4-4v13l-4-4H0z" fill="#f4f6f8" /><circle cx="10.500" cy="10.500" r="4.500" fill="#e2231f" stroke="#fff" /><path d="M7.800 8l5.400 5" stroke="#fff" strokeWidth="1.400" /></svg>
          <Clock><T $ui $s={12} $c="#fff" $track={-0.45}>12:08</T><T $ui $s={12} $c="#fff" $track={-0.45}>26/09/2013</T></Clock>
          <ShowDesktop />
        </Tray>
      </Taskbar>
    </Screen>
  );
}
